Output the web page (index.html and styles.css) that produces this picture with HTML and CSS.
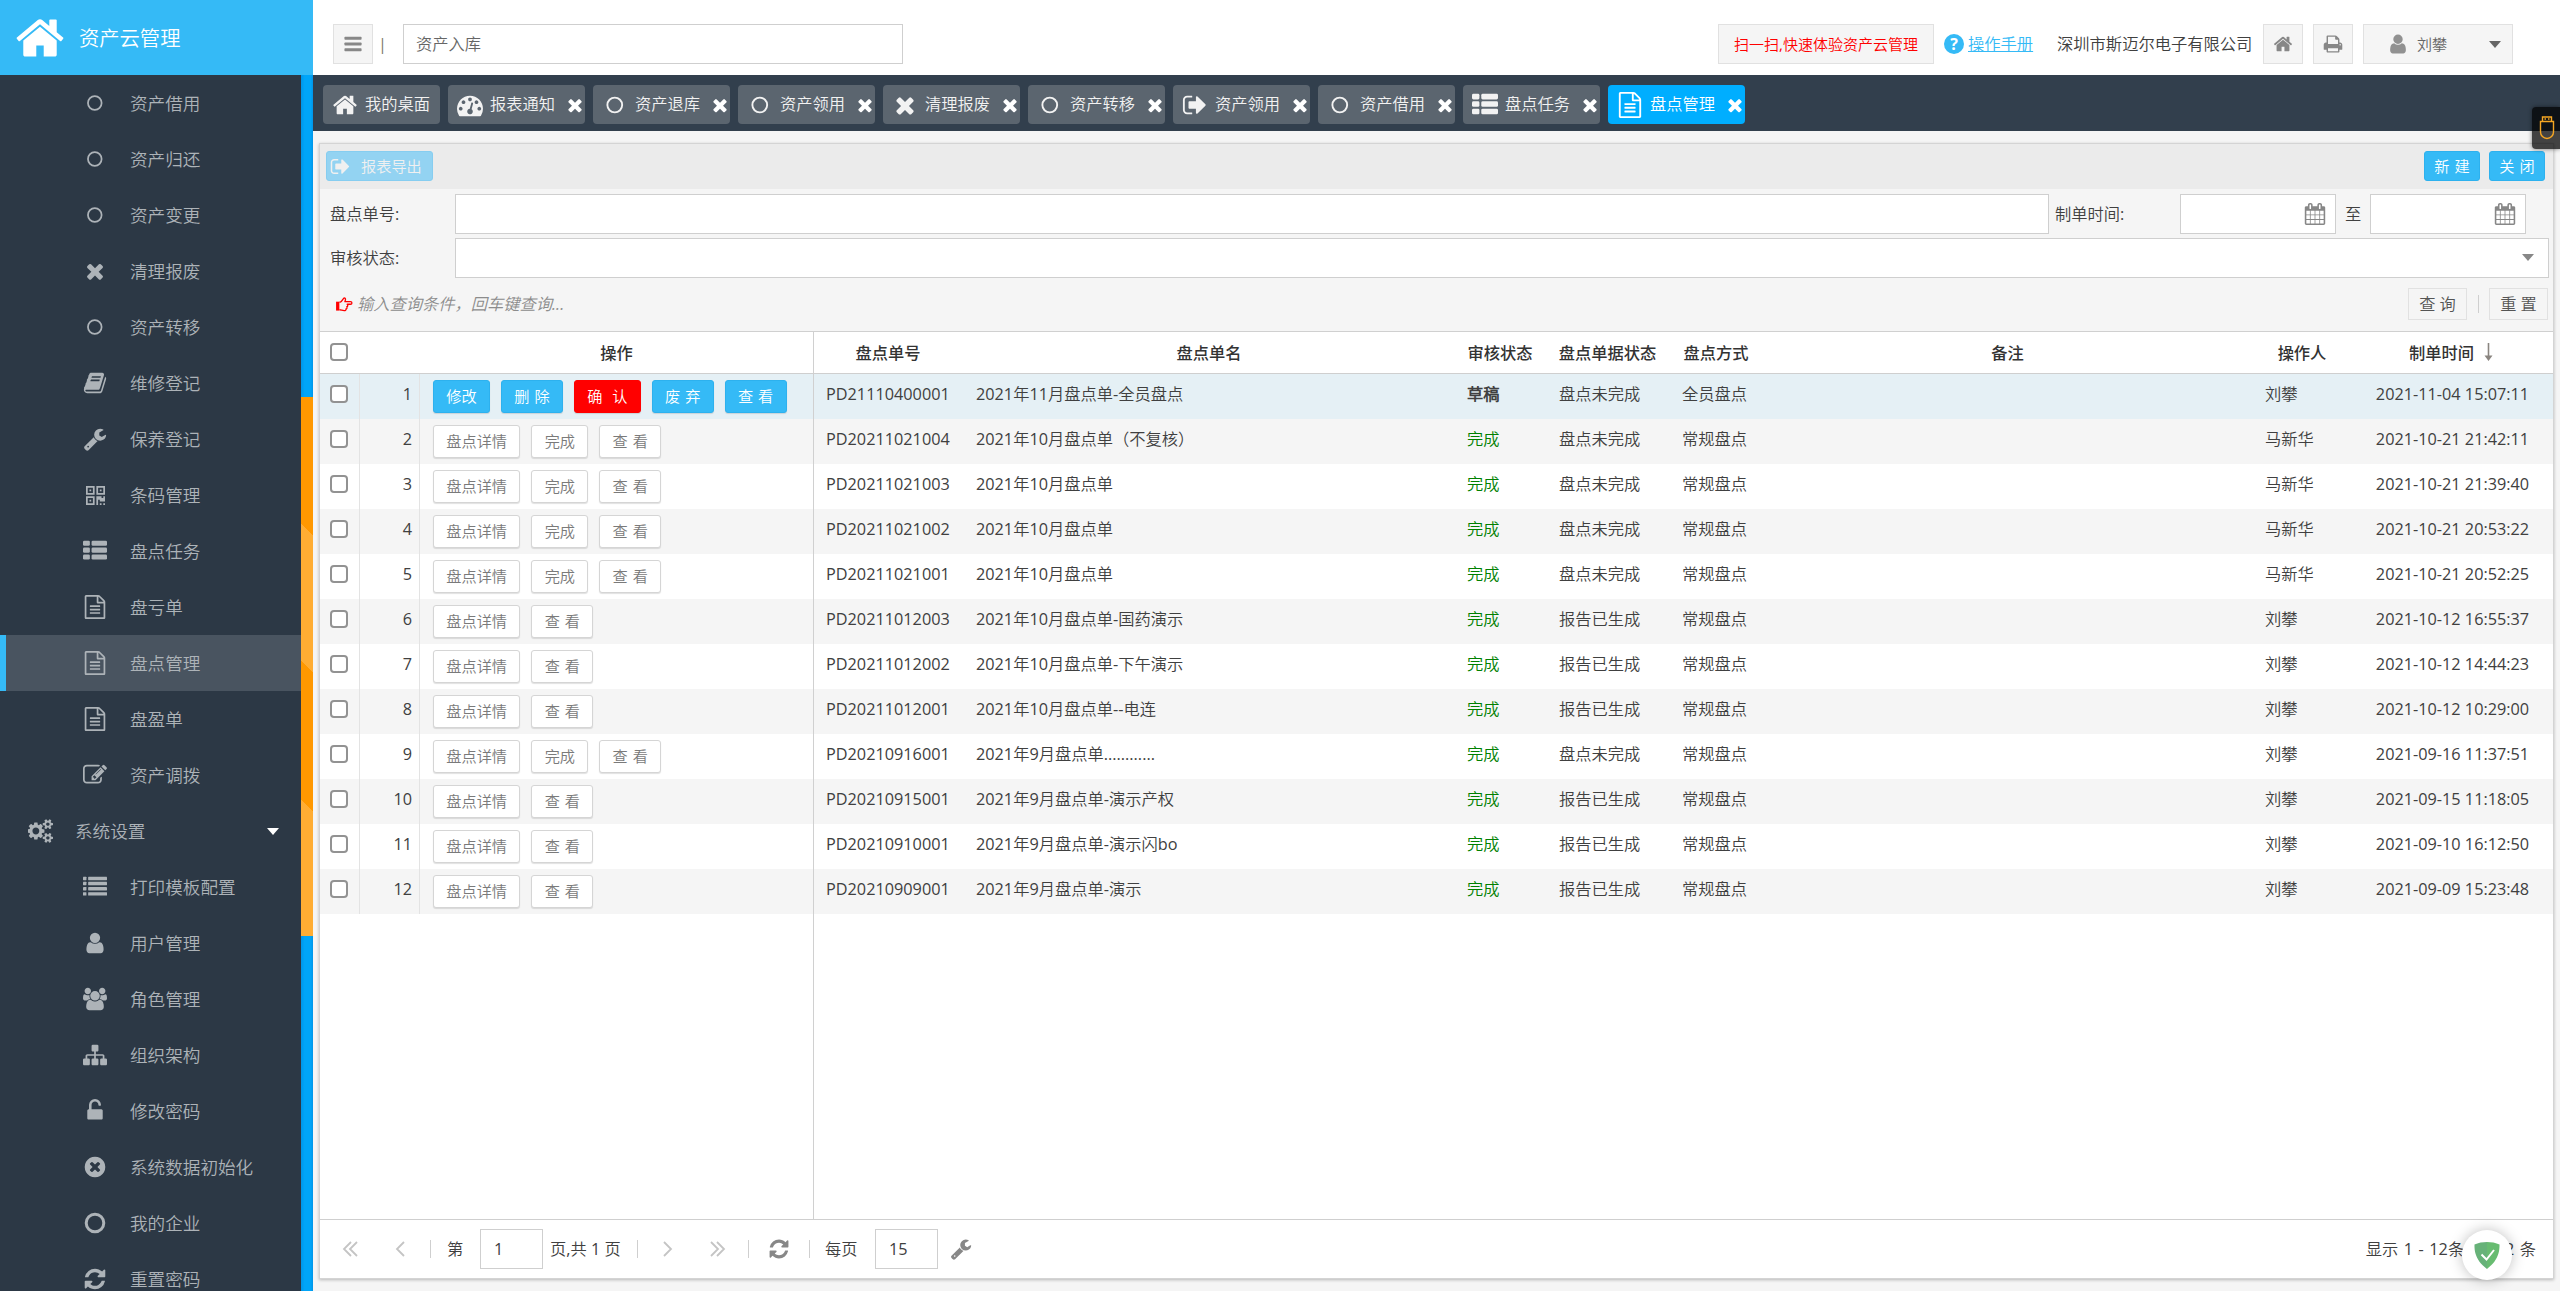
FILE: index.html
```html
<!DOCTYPE html>
<html lang="zh-CN">
<head>
<meta charset="utf-8">
<title>资产云管理</title>
<link rel="stylesheet" href="styles.css">
</head>
<body>
<svg class="defs" width="0" height="0" aria-hidden="true">
<symbol id="home" viewBox="0 0 1792 1792"><path d="M1472 992v480q0 26-19 45t-45 19h-384v-384h-256v384h-384q-26 0-45-19t-19-45v-480q0-1 .5-3t.5-3l575-474 575 474q1 2 1 6zm223-69l-62 74q-8 9-21 11h-3q-13 0-21-7l-692-577-692 577q-12 8-24 7-13-2-21-11l-62-74q-8-10-7-23.5t11-21.5l719-599q32-26 76-26t76 26l244 204v-195q0-14 9-23t23-9h192q14 0 23 9t9 23v408l219 182q10 8 11 21.5t-7 23.5z"/></symbol>
<symbol id="bars" viewBox="0 0 1792 1792"><rect x="128" y="256" width="1536" height="256" rx="64"/><rect x="128" y="768" width="1536" height="256" rx="64"/><rect x="128" y="1280" width="1536" height="256" rx="64"/></symbol>
<symbol id="times" viewBox="0 0 1792 1792"><path d="M1490 1322q0 40-28 68l-136 136q-28 28-68 28t-68-28l-294-294-294 294q-28 28-68 28t-68-28l-136-136q-28-28-28-68t28-68l294-294-294-294q-28-28-28-68t28-68l136-136q28-28 68-28t68 28l294 294 294-294q28-28 68-28t68 28l136 136q28 28 28 68t-28 68l-294 294 294 294q28 28 28 68z"/></symbol>
<symbol id="user" viewBox="0 0 1792 1792"><path d="M1536 1399q0 109-62.500 187t-150.500 78h-854q-88 0-150.500-78t-62.500-187q0-85 8.500-160.500t31.500-152 58.500-131 94-89 134.500-34.500q131 128 313 128t313-128q76 0 134.500 34.500t94 89 58.500 131 31.500 152 8.500 160.500zm-256-887q0 159-112.500 271.500t-271.500 112.500-271.500-112.500-112.500-271.500 112.500-271.500 271.500-112.500 271.500 112.500 112.500 271.500z"/></symbol>
<symbol id="wrench" viewBox="0 0 1792 1792"><path d="M448 1472q0-26-19-45t-45-19-45 19-19 45 19 45 45 19 45-19 19-45zm644-420l-682 682q-37 37-90 37-52 0-91-37l-106-108q-38-36-38-90 0-53 38-91l681-681q39 98 114.500 173.500t173.500 114.500zm634-435q0 39-23 106-47 134-164.500 217.500t-258.500 83.500q-185 0-316.500-131.500t-131.500-316.500 131.500-316.500 316.500-131.500q58 0 121.500 16.500t107.500 46.500q16 11 16 28t-16 28l-293 169v224l193 107q5-3 79-48.500t135.500-81 70.500-35.500q15 0 23.500 10t8.500 25z"/></symbol>
<symbol id="refresh" viewBox="0 0 1792 1792"><path d="M1639 1056q0 5-1 7-64 268-268 434.500t-478 166.500q-146 0-282.500-55t-243.500-157l-129 129q-19 19-45 19t-45-19-19-45v-448q0-26 19-45t45-19h448q26 0 45 19t19 45-19 45l-137 137q71 66 161 102t187 36q134 0 250-65t186-179q11-17 53-117 8-23 30-23h192q13 0 22.500 9.500t9.500 22.500zm25-800v448q0 26-19 45t-45 19h-448q-26 0-45-19t-19-45 19-45l138-138q-148-137-349-137-134 0-250 65t-186 179q-11 17-53 117-8 23-30 23h-199q-13 0-22.500-9.500t-9.500-22.500v-7q65-268 270-434.500t480-166.500q146 0 284 55.500t245 156.500l130-129q19-19 45-19t45 19 19 45z"/></symbol>
<symbol id="signout" viewBox="0 0 1792 1792"><path d="M704 1440q0 4 1 20t.5 26.500-3 23.500-10 19.500-20.500 6.500h-320q-119 0-203.500-84.500t-84.500-203.500v-704q0-119 84.500-203.500t203.500-84.500h320q13 0 22.500 9.500t9.500 22.500q0 4 1 20t.5 26.500-3 23.500-10 19.500-20.500 6.500h-320q-66 0-113 47t-47 113v704q0 66 47 113t113 47h312l11.500 1 11.500 3 8 5.500 7 9 2 13.500zm928-544q0 26-19 45l-544 544q-19 19-45 19t-45-19-19-45v-288h-448q-26 0-45-19t-19-45v-384q0-26 19-45t45-19h448v-288q0-26 19-45t45-19 45 19l544 544q19 19 19 45z"/></symbol>
<symbol id="thlist" viewBox="0 0 1792 1792"><rect x="0" y="128" width="512" height="384" rx="96"/><rect x="640" y="128" width="1152" height="384" rx="96"/><rect x="0" y="640" width="512" height="384" rx="96"/><rect x="640" y="640" width="1152" height="384" rx="96"/><rect x="0" y="1152" width="512" height="384" rx="96"/><rect x="640" y="1152" width="1152" height="384" rx="96"/></symbol>
<symbol id="list" viewBox="0 0 1792 1792"><rect x="0" y="128" width="256" height="256" rx="32"/><rect x="384" y="128" width="1408" height="256" rx="32"/><rect x="0" y="512" width="256" height="256" rx="32"/><rect x="384" y="512" width="1408" height="256" rx="32"/><rect x="0" y="896" width="256" height="256" rx="32"/><rect x="384" y="896" width="1408" height="256" rx="32"/><rect x="0" y="1280" width="256" height="256" rx="32"/><rect x="384" y="1280" width="1408" height="256" rx="32"/></symbol>
<symbol id="file" viewBox="0 0 1792 1792"><path d="M1596 380q28 28 48 76t20 88v1152q0 40-28 68t-68 28h-1344q-40 0-68-28t-28-68v-1600q0-40 28-68t68-28h896q40 0 88 20t76 48zm-444-244v376h376q-10-29-22-41l-313-313q-12-12-41-22zm384 1528v-1024h-416q-40 0-68-28t-28-68v-416h-768v1536h1280zm-1024-864q0-14 9-23t23-9h704q14 0 23 9t9 23v64q0 14-9 23t-23 9h-704q-14 0-23-9t-9-23v-64zm736 224q14 0 23 9t9 23v64q0 14-9 23t-23 9h-704q-14 0-23-9t-9-23v-64q0-14 9-23t23-9h704zm0 256q14 0 23 9t9 23v64q0 14-9 23t-23 9h-704q-14 0-23-9t-9-23v-64q0-14 9-23t23-9h704z"/></symbol>
<symbol id="unlock" viewBox="0 0 1792 1792"><path d="M1376 768q40 0 68 28t28 68v576q0 40-28 68t-68 28h-960q-40 0-68-28t-28-68v-576q0-40 28-68t68-28h32v-320q0-185 131.500-316.500t316.500-131.500 316.500 131.500 131.500 316.500q0 26-19 45t-45 19h-64q-26 0-45-19t-19-45q0-106-75-181t-181-75-181 75-75 181v320h736z"/></symbol>
<symbol id="timescircle" viewBox="0 0 1792 1792"><path d="M1277 1122q0-26-19-45l-181-181 181-181q19-19 19-45 0-27-19-46l-90-90q-19-19-46-19-26 0-45 19l-181 181-181-181q-19-19-45-19-27 0-46 19l-90 90q-19 19-19 46 0 26 19 45l181 181-181 181q-19 19-19 45 0 27 19 46l90 90q19 19 46 19 26 0 45-19l181-181 181 181q19 19 45 19 27 0 46-19l90-90q19-19 19-46zm387-226q0 209-103 385.500t-279.500 279.500-385.500 103-385.500-103-279.500-279.500-103-385.500 103-385.500 279.500-279.500 385.500-103 385.500 103 279.500 279.500 103 385.500z"/></symbol>
<symbol id="circle" viewBox="0 0 1792 1792"><circle cx="896" cy="896" r="656" fill="none" stroke="currentColor" stroke-width="224"/></symbol>
<symbol id="thin" viewBox="0 0 1792 1792"><circle cx="880" cy="896" r="510" fill="none" stroke="currentColor" stroke-width="130"/></symbol>
<symbol id="book" viewBox="0 0 1792 1792"><path d="M1703 478q40 57 18 129l-275 906q-19 64-76.500 107.500t-122.500 43.500h-923q-77 0-148.500-53.500t-99.500-131.500q-24-67-2-127 0-4 3-27t4-37q1-8-3-21.500t-3-19.500q2-11 8-21t16.500-23.500 16.500-23.500q23-38 45-91.500t30-91.500q3-10 .5-30t-.5-28q3-11 17-28t17-23q21-36 42-92t25-90q1-9-2.500-32t.5-28q4-13 22-30.500t22-22.500q19-26 42.500-84.500t27.500-96.500q1-8-3-25.500t-2-26.500q2-8 9-18t18-23 17-21q8-12 16.500-30.500t15-35 16-36 19.500-32 26.500-23.500 36-11.500 47.500 5.500l-1 3q38-9 51-9h761q74 0 114 56t18 130l-274 906q-36 119-71.500 153.500t-128.500 34.500h-869q-27 0-38 15-11 16-1 43 24 70 144 70h923q29 0 56-15.500t35-41.500l300-987q7-22 5-57 38 15 59 43zm-1064 2q-4 13 2 22.500t20 9.500h608q13 0 25.500-9.500t16.500-22.500l21-64q4-13-2-22.500t-20-9.500h-608q-13 0-25.500 9.500t-16.500 22.500zm-83 256q-4 13 2 22.500t20 9.500h608q13 0 25.500-9.500t16.500-22.500l21-64q4-13-2-22.500t-20-9.500h-608q-13 0-25.500 9.500t-16.500 22.500z"/></symbol>
<symbol id="sitemap" viewBox="0 0 1792 1792"><path d="M1792 1248v320q0 40-28 68t-68 28h-320q-40 0-68-28t-28-68v-320q0-40 28-68t68-28h96v-192h-512v192h96q40 0 68 28t28 68v320q0 40-28 68t-68 28h-320q-40 0-68-28t-28-68v-320q0-40 28-68t68-28h96v-192h-512v192h96q40 0 68 28t28 68v320q0 40-28 68t-68 28h-320q-40 0-68-28t-28-68v-320q0-40 28-68t68-28h96v-192q0-52 38-90t90-38h512v-192h-96q-40 0-68-28t-28-68v-320q0-40 28-68t68-28h320q40 0 68 28t28 68v320q0 40-28 68t-68 28h-96v192h512q52 0 90 38t38 90v192h96q40 0 68 28t28 68z"/></symbol>
<symbol id="users" viewBox="0 0 1920 1792"><path d="M593 896q-162 5-265 128h-134q-82 0-138-40.500t-56-118.500q0-353 124-353 6 0 43.500 21t97.500 42.500 119 21.500q67 0 133-23-5 37-5 66 0 139 81 256zm1071 637q0 120-73 189.500t-194 69.500h-874q-121 0-194-69.500t-73-189.500q0-53 3.500-103.500t14-109 26.500-108.500 43-97.500 62-81 85.500-53.500 111.500-20q10 0 43 21.500t73 48 107 48 135 21.500 135-21.500 107-48 73-48 43-21.500q61 0 111.500 20t85.500 53.500 62 81 43 97.500 26.500 108.500 14 109 3.500 103.500zm-1024-1277q0 106-75 181t-181 75-181-75-75-181 75-181 181-75 181 75 75 181zm704 384q0 159-112.500 271.500t-271.500 112.500-271.500-112.500-112.500-271.500 112.500-271.500 271.500-112.500 271.500 112.500 112.500 271.500zm576 225q0 78-56 118.500t-138 40.500h-134q-103-123-265-128 81-117 81-256 0-29-5-66 66 23 133 23 59 0 119-21.500t97.500-42.500 43.500-21q124 0 124 353zm-128-609q0 106-75 181t-181 75-181-75-75-181 75-181 181-75 181 75 75 181z"/></symbol>
<symbol id="edit" viewBox="0 0 1792 1792"><path d="M888 1184l116-116-152-152-116 116v56h96v96h56zm440-720q-16-16-33 1l-350 350q-17 17-1 33t33-1l350-350q17-17 1-33zm80 594v190q0 119-84.500 203.500t-203.500 84.500h-832q-119 0-203.500-84.500t-84.500-203.500v-832q0-119 84.500-203.500t203.500-84.500h832q63 0 117 25 15 7 18 23 3 17-9 29l-49 49q-14 14-32 8-23-6-45-6h-832q-66 0-113 47t-47 113v832q0 66 47 113t113 47h832q66 0 113-47t47-113v-126q0-13 9-22l64-64q15-15 35-7t20 29zm-96-738l288 288-672 672h-288v-288zm444 132l-92 92-288-288 92-92q28-28 68-28t68 28l152 152q28 28 28 68t-28 68z"/></symbol>
<symbol id="dash" viewBox="0 0 1792 1792"><path d="M384 1152q0-53-37.500-90.500t-90.500-37.500-90.500 37.500-37.500 90.500 37.500 90.500 90.500 37.500 90.500-37.500 37.500-90.500zm192-448q0-53-37.500-90.500t-90.500-37.500-90.500 37.500-37.500 90.500 37.500 90.500 90.500 37.500 90.500-37.500 37.500-90.500zm428 481l101-382q6-26-7.500-48.500t-38.500-29.500-48 6.500-30 39.500l-101 382q-60 5-107 43.500t-63 98.500q-20 77 20 146t117 89 146-20 89-117q16-60-6-117t-72-91zm660-33q0-53-37.500-90.500t-90.500-37.500-90.500 37.500-37.500 90.500 37.500 90.500 90.500 37.500 90.500-37.500 37.500-90.500zm-640-640q0-53-37.500-90.500t-90.500-37.500-90.500 37.500-37.500 90.500 37.500 90.500 90.500 37.500 90.500-37.500 37.500-90.500zm448 192q0-53-37.500-90.500t-90.500-37.500-90.500 37.500-37.500 90.500 37.500 90.500 90.500 37.500 90.500-37.500 37.500-90.500zm320 448q0 261-141 483-19 29-54 29h-1402q-35 0-54-29-141-221-141-483 0-182 71-348t191-286 286-191 348-71 348 71 286 191 191 286 71 348z"/></symbol>
<symbol id="gears" viewBox="0 0 1920 1792"><path d="M832 896q0-106-75-181t-181-75-181 75-75 181 75 181 181 75 181-75 75-181zm768 512q0-52-38-90t-90-38-90 38-38 90q0 53 37.500 90.500t90.500 37.500 90.500-37.500 37.500-90.500zm0-1024q0-52-38-90t-90-38-90 38-38 90q0 53 37.500 90.500t90.500 37.500 90.500-37.500 37.500-90.500zm-384 421v185q0 10-7 19.500t-16 10.500l-155 24q-11 35-32 76 34 48 90 115 7 11 7 20 0 12-7 19-23 30-82.500 89.500t-78.500 59.500q-11 0-21-7l-115-90q-37 19-77 31-11 108-23 155-7 24-30 24h-186q-11 0-20-7.500t-10-17.500l-23-153q-34-10-75-31l-118 89q-7 7-20 7-11 0-21-8-144-133-144-160 0-9 7-19 10-14 41-53t47-61q-23-44-35-82l-152-24q-10-1-17-9.500t-7-19.500v-185q0-10 7-19.500t16-10.500l155-24q11-35 32-76-34-48-90-115-7-11-7-20 0-12 7-20 22-30 82-89t79-59q11 0 21 7l115 90q34-18 77-32 11-108 23-154 7-24 30-24h186q11 0 20 7.500t10 17.500l23 153q34 10 75 31l118-89q8-7 20-7 11 0 21 8 144 133 144 160 0 8-7 19-12 16-42 54t-45 60q23 48 34 82l152 23q10 2 17 10.500t7 19.500zm640 533v140q0 16-149 31-12 27-30 52 51 113 51 138 0 4-4 7-122 71-124 71-8 0-46-47t-52-68q-20 2-30 2t-30-2q-14 21-52 68t-46 47q-2 0-124-71-4-3-4-7 0-25 51-138-18-25-30-52-149-15-149-31v-140q0-16 149-31 13-29 30-52-51-113-51-138 0-4 4-7 4-2 35-20t59-34 30-16q8 0 46 46.500t52 67.500q20-2 30-2t30 2q51-71 92-112l6-2q4 0 124 70 4 3 4 7 0 25-51 138 17 23 30 52 149 15 149 31zm0-1024v140q0 16-149 31-12 27-30 52 51 113 51 138 0 4-4 7-122 71-124 71-8 0-46-47t-52-68q-20 2-30 2t-30-2q-14 21-52 68t-46 47q-2 0-124-71-4-3-4-7 0-25 51-138-18-25-30-52-149-15-149-31v-140q0-16 149-31 13-29 30-52-51-113-51-138 0-4 4-7 4-2 35-20t59-34 30-16q8 0 46 46.500t52 67.500q20-2 30-2t30 2q51-71 92-112l6-2q4 0 124 70 4 3 4 7 0 25-51 138 17 23 30 52 149 15 149 31z"/></symbol>
<symbol id="print" viewBox="0 0 1792 1792"><path d="M448 1536h896v-256h-896v256zm0-640h896v-384h-160q-40 0-68-28t-28-68v-160h-640v640zm1152 64q0-26-19-45t-45-19-45 19-19 45 19 45 45 19 45-19 19-45zm128 0v416q0 13-9.500 22.500t-22.500 9.500h-224v160q0 40-28 68t-68 28h-960q-40 0-68-28t-28-68v-160h-224q-13 0-22.500-9.500t-9.500-22.500v-416q0-79 56.500-135.500t135.500-56.500h64v-544q0-40 28-68t68-28h672q40 0 88 20t76 48l152 152q28 28 48 76t20 88v256h64q79 0 135.500 56.500t56.500 135.500z"/></symbol>
<symbol id="calendar" viewBox="0 0 1792 1792"><path d="M192 1664h288v-288h-288v288zm352 0h320v-288h-320v288zm-352-352h288v-320h-288v320zm352 0h320v-320h-320v320zm-352-384h288v-288h-288v288zm736 736h320v-288h-320v288zm-384-736h320v-288h-320v288zm768 736h288v-288h-288v288zm-384-352h320v-320h-320v320zm-352-864v-288q0-13-9.500-22.500t-22.500-9.500h-64q-13 0-22.500 9.500t-9.500 22.500v288q0 13 9.500 22.500t22.500 9.500h64q13 0 22.500-9.500t9.500-22.500zm736 864h288v-320h-288v320zm-384-384h320v-288h-320v288zm384 0h288v-288h-288v288zm32-480v-288q0-13-9.500-22.500t-22.500-9.500h-64q-13 0-22.500 9.500t-9.500 22.500v288q0 13 9.500 22.500t22.500 9.500h64q13 0 22.500-9.500t9.500-22.500zm384-64v1280q0 52-38 90t-90 38h-1408q-52 0-90-38t-38-90v-1280q0-52 38-90t90-38h128v-96q0-66 47-113t113-47h64q66 0 113 47t47 113v96h384v-96q0-66 47-113t113-47h64q66 0 113 47t47 113v96h128q52 0 90 38t38 90z"/></symbol>
<symbol id="qr" viewBox="0 0 22 22"><path fill-rule="evenodd" d="M0 0h10v10H0zM2 2v6h6V2zM4 4h2v2H4zM12 0h10v10H12zM14 2v6h6V2zM16 4h2v2h-2zM0 12h10v10H0zM2 14v6h6v-6zM4 16h2v2H4zM12 12h6v2h2v-2h2v6h-6v-2h-2v6h-2zM16 20h2v2h-2zM20 20h2v2h-2z"/></symbol>
<symbol id="hand" viewBox="0 0 18 16"><path d="M0 5h3.500v9.500H0z"/><path fill="none" stroke="currentColor" stroke-width="1.400" stroke-linejoin="round" d="M3.500 5.500h1C6.500 5 7.500 1.200 8.800 1c1.600 0 1.600 1.700.6 4h6c2 0 2 2.700 0 2.700h-3.500c1 1.200.6 2.400-.4 2.700.6 1.200 0 2.200-.9 2.400.3 1.200-.6 1.700-2 1.700-2 0-3.200-.9-5-.9"/></symbol>
<symbol id="left" viewBox="0 0 10 16"><path fill="none" stroke="currentColor" stroke-width="1.800" d="M9 1L2 8l7 7"/></symbol>
<symbol id="dleft" viewBox="0 0 16 16"><path fill="none" stroke="currentColor" stroke-width="1.800" d="M9 1L2 8l7 7M15 1L8 8l7 7"/></symbol>
</svg>

<div class="app">
<aside class="side">
  <div class="brand"><svg><use href="#home"/></svg><span>资产云管理</span></div>
  <div class="sidebody">
    <nav class="menu">
      <a><svg><use href="#thin"/></svg>资产借用</a>
      <a><svg><use href="#thin"/></svg>资产归还</a>
      <a><svg><use href="#thin"/></svg>资产变更</a>
      <a><svg><use href="#times"/></svg>清理报废</a>
      <a><svg><use href="#thin"/></svg>资产转移</a>
      <a><svg><use href="#book"/></svg>维修登记</a>
      <a><svg><use href="#wrench"/></svg>保养登记</a>
      <a><svg class="qr"><use href="#qr"/></svg>条码管理</a>
      <a><svg><use href="#thlist"/></svg>盘点任务</a>
      <a><svg><use href="#file"/></svg>盘亏单</a>
      <a class="on"><svg><use href="#file"/></svg>盘点管理</a>
      <a><svg><use href="#file"/></svg>盘盈单</a>
      <a><svg><use href="#edit"/></svg>资产调拨</a>
      <a class="group"><svg><use href="#gears"/></svg>系统设置<i class="caret"></i></a>
      <a><svg><use href="#list"/></svg>打印模板配置</a>
      <a><svg><use href="#user"/></svg>用户管理</a>
      <a><svg><use href="#users"/></svg>角色管理</a>
      <a><svg><use href="#sitemap"/></svg>组织架构</a>
      <a><svg><use href="#unlock"/></svg>修改密码</a>
      <a><svg><use href="#timescircle"/></svg>系统数据初始化</a>
      <a><svg><use href="#circle"/></svg>我的企业</a>
      <a><svg><use href="#refresh"/></svg>重置密码</a>
    </nav>
    <div class="track"><div class="thumb"></div></div>
  </div>
</aside>

<div class="main">
  <header class="top">
    <div class="sq"><svg><use href="#bars"/></svg></div>
    <span class="bar">|</span>
    <div class="search">资产入库</div>
    <div class="scan">扫一扫,快速体验资产云管理</div>
    <span class="q">?</span><a class="manual">操作手册</a>
    <span class="company">深圳市斯迈尔电子有限公司</span>
    <div class="sq"><svg><use href="#home"/></svg></div>
    <div class="sq"><svg><use href="#print"/></svg></div>
    <div class="who"><svg><use href="#user"/></svg><span>刘攀</span><i class="caret"></i></div>
  </header>

  <div class="tabs">
    <div class="tab first"><svg><use href="#home"/></svg><span>我的桌面</span></div>
    <div class="tab"><svg><use href="#dash"/></svg><span>报表通知</span><svg class="x"><use href="#times"/></svg></div>
    <div class="tab"><svg><use href="#thin"/></svg><span>资产退库</span><svg class="x"><use href="#times"/></svg></div>
    <div class="tab"><svg><use href="#thin"/></svg><span>资产领用</span><svg class="x"><use href="#times"/></svg></div>
    <div class="tab"><svg><use href="#times"/></svg><span>清理报废</span><svg class="x"><use href="#times"/></svg></div>
    <div class="tab"><svg><use href="#thin"/></svg><span>资产转移</span><svg class="x"><use href="#times"/></svg></div>
    <div class="tab"><svg><use href="#signout"/></svg><span>资产领用</span><svg class="x"><use href="#times"/></svg></div>
    <div class="tab"><svg><use href="#thin"/></svg><span>资产借用</span><svg class="x"><use href="#times"/></svg></div>
    <div class="tab"><svg><use href="#thlist"/></svg><span>盘点任务</span><svg class="x"><use href="#times"/></svg></div>
    <div class="tab on"><svg><use href="#file"/></svg><span>盘点管理</span><svg class="x"><use href="#times"/></svg></div>
  </div>

  <section class="panel">
    <div class="toolbar">
      <div class="export"><svg><use href="#signout"/></svg>报表导出</div>
      <div class="tb">新 建</div><div class="tb">关 闭</div>
    </div>
    <div class="form">
      <div class="line"><label class="lab">盘点单号:</label><div class="field grow"></div><label class="lab2">制单时间:</label><div class="field date"><svg><use href="#calendar"/></svg></div><span class="to">至</span><div class="field date last"><svg><use href="#calendar"/></svg></div></div>
      <div class="line"><label class="lab">审核状态:</label><div class="field grow sel"><i class="caret"></i></div></div>
      <div class="hint"><svg><use href="#hand"/></svg><em>输入查询条件，回车键查询...</em><div class="btn">查 询</div><i class="vsep"></i><div class="btn">重 置</div></div>
    </div>

    <div class="grid">
      <div class="row head"><div><i class="cb"></i></div><div></div><div>操作</div><div>盘点单号</div><div>盘点单名</div><div>审核状态</div><div>盘点单据状态</div><div>盘点方式</div><div>备注</div><div>操作人</div><div>制单时间<svg class="sort" viewBox="0 0 8 18"><path d="M3.200 0h1.600v12.500H8L4 18 0 12.500h3.200z"/></svg></div></div>
      <div class="row sel"><div><i class="cb"></i></div><div>1</div><div><b>修改</b><b>删 除</b><b class="red">确&nbsp; 认</b><b>废 弃</b><b>查 看</b></div><div>PD21110400001</div><div>2021年11月盘点单-全员盘点</div><div>草稿</div><div>盘点未完成</div><div>全员盘点</div><div></div><div>刘攀</div><div>2021-11-04 15:07:11</div></div>
      <div class="row"><div><i class="cb"></i></div><div>2</div><div><b>盘点详情</b><b>完成</b><b>查 看</b></div><div>PD20211021004</div><div>2021年10月盘点单（不复核）</div><div>完成</div><div>盘点未完成</div><div>常规盘点</div><div></div><div>马新华</div><div>2021-10-21 21:42:11</div></div>
      <div class="row"><div><i class="cb"></i></div><div>3</div><div><b>盘点详情</b><b>完成</b><b>查 看</b></div><div>PD20211021003</div><div>2021年10月盘点单</div><div>完成</div><div>盘点未完成</div><div>常规盘点</div><div></div><div>马新华</div><div>2021-10-21 21:39:40</div></div>
      <div class="row"><div><i class="cb"></i></div><div>4</div><div><b>盘点详情</b><b>完成</b><b>查 看</b></div><div>PD20211021002</div><div>2021年10月盘点单</div><div>完成</div><div>盘点未完成</div><div>常规盘点</div><div></div><div>马新华</div><div>2021-10-21 20:53:22</div></div>
      <div class="row"><div><i class="cb"></i></div><div>5</div><div><b>盘点详情</b><b>完成</b><b>查 看</b></div><div>PD20211021001</div><div>2021年10月盘点单</div><div>完成</div><div>盘点未完成</div><div>常规盘点</div><div></div><div>马新华</div><div>2021-10-21 20:52:25</div></div>
      <div class="row"><div><i class="cb"></i></div><div>6</div><div><b>盘点详情</b><b>查 看</b></div><div>PD20211012003</div><div>2021年10月盘点单-国药演示</div><div>完成</div><div>报告已生成</div><div>常规盘点</div><div></div><div>刘攀</div><div>2021-10-12 16:55:37</div></div>
      <div class="row"><div><i class="cb"></i></div><div>7</div><div><b>盘点详情</b><b>查 看</b></div><div>PD20211012002</div><div>2021年10月盘点单-下午演示</div><div>完成</div><div>报告已生成</div><div>常规盘点</div><div></div><div>刘攀</div><div>2021-10-12 14:44:23</div></div>
      <div class="row"><div><i class="cb"></i></div><div>8</div><div><b>盘点详情</b><b>查 看</b></div><div>PD20211012001</div><div>2021年10月盘点单--电连</div><div>完成</div><div>报告已生成</div><div>常规盘点</div><div></div><div>刘攀</div><div>2021-10-12 10:29:00</div></div>
      <div class="row"><div><i class="cb"></i></div><div>9</div><div><b>盘点详情</b><b>完成</b><b>查 看</b></div><div>PD20210916001</div><div>2021年9月盘点单............</div><div>完成</div><div>盘点未完成</div><div>常规盘点</div><div></div><div>刘攀</div><div>2021-09-16 11:37:51</div></div>
      <div class="row"><div><i class="cb"></i></div><div>10</div><div><b>盘点详情</b><b>查 看</b></div><div>PD20210915001</div><div>2021年9月盘点单-演示产权</div><div>完成</div><div>报告已生成</div><div>常规盘点</div><div></div><div>刘攀</div><div>2021-09-15 11:18:05</div></div>
      <div class="row"><div><i class="cb"></i></div><div>11</div><div><b>盘点详情</b><b>查 看</b></div><div>PD20210910001</div><div>2021年9月盘点单-演示闪bo</div><div>完成</div><div>报告已生成</div><div>常规盘点</div><div></div><div>刘攀</div><div>2021-09-10 16:12:50</div></div>
      <div class="row"><div><i class="cb"></i></div><div>12</div><div><b>盘点详情</b><b>查 看</b></div><div>PD20210909001</div><div>2021年9月盘点单-演示</div><div>完成</div><div>报告已生成</div><div>常规盘点</div><div></div><div>刘攀</div><div>2021-09-09 15:23:48</div></div>
      <div class="rest"></div>
    </div>

    <div class="pager">
      <svg class="dbl"><use href="#dleft"/></svg><svg class="sgl"><use href="#left"/></svg><i class="vsep"></i>
      <span class="di">第</span><div class="num">1</div><span class="gong">页,共 1 页</span><i class="vsep"></i>
      <svg class="sgl flip"><use href="#left"/></svg><svg class="dbl flip"><use href="#dleft"/></svg><i class="vsep"></i>
      <svg class="ic"><use href="#refresh"/></svg><i class="vsep"></i><span class="mei">每页</span><div class="num">15</div><svg class="ic wr"><use href="#wrench"/></svg>
      <span class="total">显示 1 - 12条, 共 12 条</span>
    </div>
  </section>
</div>
</div>

<div class="usb"><svg viewBox="0 0 16 24" width="16" height="24"><path fill="none" stroke="#f5a623" stroke-width="1.400" d="M3.500 5V1h9v4M1.500 5.500h13V16a6.500 6.500 0 0 1-13 0zM5.500 3h1.500M9 3h1.500"/></svg></div>
<div class="shield"><svg viewBox="0 0 26 27" width="26" height="27"><path fill="#67b279" d="M13 0C9 0 4 .700.500 2.600.500 6.500 0 17.500 13 27z"/><path fill="#68bc71" d="M13 0c4 0 9 .700 12.500 2.600 0 3.900.500 14.900-12.500 24.400z"/><path fill="none" stroke="#fff" stroke-width="2" d="M7.500 12.500l5 5 7.500-9.500"/></svg></div>
</body>
</html>
```

FILE: styles.css
```css
* { box-sizing: border-box; }
body { margin: 0; width: 2560px; height: 1291px; overflow: hidden; background: #f5f5f5; color: #404040; font: 16.25px/24px "Open Sans", "Noto Sans CJK SC DemiLight", "Noto Sans CJK SC", sans-serif; }
svg { fill: currentColor; flex: none; display: block; }
.defs { position: absolute; }
i { font-style: normal; flex: none; }
.app { display: flex; height: 1291px; }
.caret { width: 0; height: 0; border: 6px solid transparent; border-top: 8px solid currentColor; border-bottom: 0; }

/* sidebar */
.side { width: 313px; flex: none; display: flex; flex-direction: column; }
.brand { height: 75px; flex: none; background: #35baf6; color: #fff; font-size: 20.300px; display: flex; align-items: center; padding-left: 14px; gap: 13px; }
.brand svg { width: 52px; height: 52px; }
.sidebody { display: flex; flex: 1; min-height: 0; }
.menu { width: 301px; background: #2c3845; overflow: hidden; color: #adb3b8; font-size: 17.6px; }
.menu a { display: flex; align-items: center; height: 56px; padding-left: 79px; border-left: 4px solid transparent; }
.menu svg { width: 24px; height: 24px; margin-right: 23px; }
.menu .qr { width: 19px; height: 19px; margin: 0 25px 0 3px; }
.menu .on { background: #495460; border-left: 6px solid #35baf6; padding-left: 77px; }
.menu .group { padding-left: 24px; }
.menu .group svg { width: 26px; margin-right: 21px; }
.menu .caret { margin-left: auto; margin-right: 22px; border-top-width: 7px; color: #fff; }
.track { width: 12px; background: linear-gradient(90deg, #0095e8, #00a5f8 30%, #00a5f8 80%, #0095e8); padding-top: 322px; }
.thumb { height: 539px; background: repeating-linear-gradient(225deg, #ff9800 0 97.600px, #ffad33 97.600px 195.160px); }

/* header */
.main { flex: 1; min-width: 0; display: flex; flex-direction: column; }
.top { height: 75px; flex: none; background: #fff; display: flex; align-items: center; padding: 13px 47px 0 20px; }
.sq { width: 40px; height: 40px; background: #f5f5f5; border: 1px solid #e1e1e1; display: flex; align-items: center; justify-content: center; color: #878787; margin-right: 10px; }
.sq svg { width: 20px; height: 20px; }
.bar { width: 20px; margin-left: -5px; margin-right: 5px; color: #7d7a68; }
.search { width: 500px; height: 40px; border: 1px solid #cfcfcf; padding: 7px 12px; color: #666; }
.scan { margin-left: auto; width: 216px; height: 40px; background: #f5f5f5; border: 1px solid #e1e1e1; color: #f00; font-size: 15px; line-height: 39px; text-align: center; white-space: nowrap; }
.q { width: 20px; height: 20px; margin-left: 10px; border-radius: 50%; background: #35baf6; color: #fff; font: bold 16px/20px "Open Sans", sans-serif; text-align: center; }
.manual { margin-left: 4px; width: 66px; white-space: nowrap; color: #35baf6; text-decoration: underline; font-size: 16.300px; }
.company { margin-left: 23px; margin-right: 10px; width: 196px; font-size: 16.300px; white-space: nowrap; }
.who { width: 150px; height: 40px; background: #f5f5f5; border: 1px solid #e1e1e1; display: flex; align-items: center; padding: 0 11px 0 23px; color: #666; font-size: 15px; }
.who svg { width: 22px; height: 22px; color: #919191; margin-right: 8px; }
.who .caret { margin-left: auto; border-top-width: 7px; }

/* tabs */
.tabs { height: 56px; flex: none; background: #323f4d; display: flex; gap: 8px; padding: 10px 0 0 10px; color: #f2f2f2; }
.tab { width: 137px; height: 39px; border-radius: 4px; background: #5b656f; display: flex; align-items: center; padding-left: 9px; }
.tab svg { width: 26px; height: 26px; }
.tab span { margin-left: 7px; width: 66px; margin-bottom: 2px; white-space: nowrap; }
.tab .x { width: 20px; height: 20px; margin-left: 10px; color: #fff; }
.tab.first { width: 117px; }
.tab.on { background: #00aeff; color: #fff; }

/* panel */
.panel { width: 2235px; height: 1136px; flex: none; margin: 12px 0 0 6px; border: 1px solid #d4d4d4; background: #fff; display: flex; flex-direction: column; box-shadow: 0 1px 3px rgba(0,0,0,.25); }
.toolbar { height: 45px; flex: none; background: #ebebeb; display: flex; align-items: flex-start; padding: 7px 8px 0 6px; gap: 9px; font-size: 15.200px; color: #fff; word-spacing: 1px; }
.export { width: 107px; height: 30px; margin-right: auto; border: 1px solid #86cdf0; border-radius: 3px; background: #93d3f2; display: flex; align-items: center; padding-left: 3px; color: #f0f0f0; }
.export svg { width: 21px; height: 21px; margin-right: 10px; }
.tb { width: 56px; height: 30px; border-radius: 3px; background: #35baf6; border: 1px solid #2db1ee; text-align: center; line-height: 28px; }
.form { height: 142px; flex: none; background: #f5f5f5; padding-top: 5px; }
.line { display: flex; align-items: center; height: 40px; margin-bottom: 4px; padding: 0 4px 0 10px; }
.lab { width: 125px; }
.lab2 { width: 131px; padding-left: 6px; }
.field { height: 40px; border: 1px solid #cfcfcf; background: #fff; display: flex; align-items: center; justify-content: flex-end; }
.grow { flex: 1; }
.date { width: 156px; padding-right: 9px; color: #878787; }
.date svg { width: 22px; height: 22px; }
.last { margin-right: 23px; }
.to { width: 34px; text-align: center; }
.field.sel { padding-right: 14px; color: #878787; }
.field.sel .caret { border-top-width: 7px; margin-bottom: 2px; }
.hint { display: flex; align-items: center; height: 32px; margin-top: 10px; padding: 0 5px 0 16px; color: #8c8c8c; }
.hint svg { width: 17px; height: 15px; color: #f00; margin-right: 4px; }
.hint em { margin-right: auto; }
.btn { width: 59px; height: 32px; border: 1px solid #e1e1e1; text-align: center; line-height: 30px; color: #555; }
.vsep { width: 1px; height: 18px; background: #cfcfcf; }
.hint .vsep { margin: 0 10px 0 11px; }

/* grid */
.grid { flex: 1; display: flex; flex-direction: column; border-top: 1px solid #d0d0d0; min-height: 0; }
.row { display: grid; height: 45px; flex: none; grid-template-columns: 40px 60px 394px 150px 490px 92px 123px 94px 489px 100px 201px; }
.row:nth-child(odd) { background: #f5f5f5; }
.row > div { padding: 8px 0 0 12px; white-space: nowrap; }
.row > div:nth-child(-n+2) { border-right: 1px solid #e3e3e3; }
.row > div:nth-child(2) { text-align: right; padding-right: 7px; }
.row > div:nth-child(3) { display: flex; padding: 6px 0 0 13px; border-right: 1px solid #d0d0d0; gap: 11px; }
.row > div:nth-child(6) { color: #008000; padding-left: 13px; }
.row > div:nth-child(7), .row > div:nth-child(8), .row > div:nth-child(10) { padding-left: 13px; }
.row > div:last-child { padding-left: 0; text-align: center; }
.row.sel { background: #e5f0f5; }
.row.sel > div:nth-child(6) { color: #404040; font-weight: 600; }
.row > div:first-child { padding: 11px 0 0 10px; }
.cb { display: block; width: 18px; height: 18px; border: 2px solid #929292; border-radius: 4px; background: #fff; }
.row b { height: 33px; padding: 0 12.300px; border: 1px solid #d5d5d5; border-radius: 3px; background: #fff; color: #7a7a7a; font-size: 15.200px; font-weight: 400; line-height: 30px; word-spacing: 1px; box-shadow: 0 1px 1px rgba(0,0,0,.12); }
.row.sel b { background: #35baf6; border-color: #2db1ee; color: #fff; }
.row.sel b.red { background: #f00; border-color: #f00; }
.row.head { height: 42px; background: #fff; border-bottom: 1px solid #cfcfcf; font-family: "Open Sans", "Noto Sans CJK SC", sans-serif; font-weight: 500; }
.row.head > div { padding: 9px 0 0; text-align: center; border-right: 0; display: block; color: #333; }
.row.head > div:first-child { padding: 11px 0 0 10px; }
.row.head > div:nth-child(3) { border-right: 1px solid #d0d0d0; }
.row.head > div:nth-child(4) { padding-right: 2px; }
.row.head > div:last-child { padding-right: 3px; }
.sort { width: 9px; height: 18px; display: inline-block; margin-left: 10px; color: #8a8580; vertical-align: -2px; }
.rest { width: 494px; flex: 1; border-right: 1px solid #d0d0d0; }

/* pager */
.pager { height: 59px; flex: none; border-top: 1px solid #cfcfcf; display: flex; align-items: center; padding: 0 17px 0 22px; }
.dbl { width: 16px; height: 16px; color: #c4c4c4; }
.sgl { width: 10px; height: 16px; color: #c4c4c4; }
.dbl + .sgl { margin-left: 37px; margin-right: 25px; }
.flip { transform: scaleX(-1); }
.di { margin-left: 16px; width: 33px; }
.num { width: 63px; height: 40px; border: 1px solid #cfcfcf; padding: 7px 13px; }
.gong { margin-left: 7px; width: 87px; white-space: nowrap; }
.sgl.flip { margin: 0 37px 0 25px; }
.dbl.flip { margin-right: 22px; }
.ic { width: 22px; height: 22px; margin: 0 19px; color: #878787; }
.mei { margin-left: 15px; width: 50px; }
.wr { margin: 0 0 0 12px; }
.total { margin-left: auto; word-spacing: 1.300px; }

/* floating widgets */
.usb { position: absolute; left: 2532px; top: 107px; width: 28px; height: 42px; border-radius: 4px 0 0 4px; background: rgba(0,0,0,.73); box-shadow: 0 0 4px rgba(0,0,0,.5); padding: 9px 0 0 7px; }
.shield { position: absolute; left: 2462px; top: 1230px; width: 50px; height: 50px; border-radius: 50%; background: #fff; box-shadow: 0 0 14px rgba(0,0,0,.25); padding: 12px; }
```
